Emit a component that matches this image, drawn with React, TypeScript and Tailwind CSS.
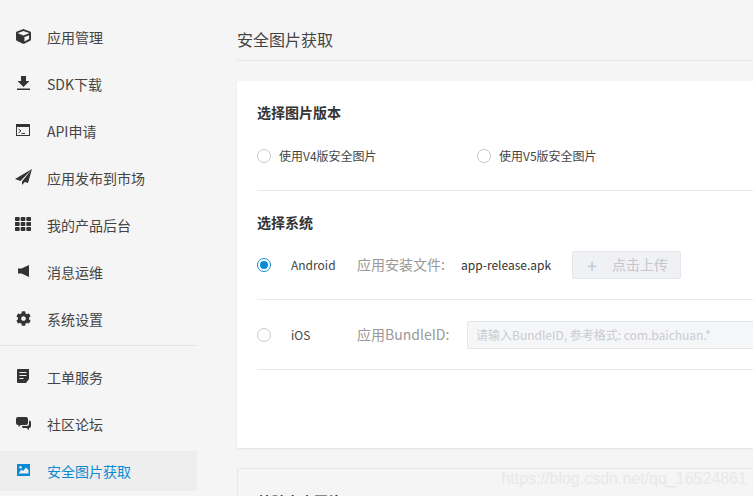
import type { ReactNode } from "react";
import { FaCog, FaCube, FaTh } from "react-icons/fa";

const FONT = "font-['Noto_Sans_CJK_SC','Noto_Sans',sans-serif]";

const DownloadIcon = () => (
  <svg width="13" height="14" viewBox="0 0 13 14">
    <path fill="#333" d="M4 0h5v5h3.500L6.500 11 .5 5H4zM0 12.500h13V14H0z" />
  </svg>
);

const PlaneIcon = () => (
  <svg width="17" height="16" viewBox="0 0 17 16">
    <path fill="#333" d="M17 0L0 10l5.500 2zM17 0L7 12.500V16l2.800-3 3.200 1z" />
  </svg>
);

const SpeakerIcon = () => (
  <svg width="11" height="12" viewBox="0 0 11 12">
    <path fill="#333" d="M0 3.500h3.500L11 0v12L3.500 8.500H0z" />
  </svg>
);

const TerminalIcon = () => (
  <svg width="14" height="13" viewBox="0 0 14 13">
    <path fill="#333" fillRule="evenodd" d="M0 0h14v12H0zM1 3v8h12V3z" />
    <path fill="none" stroke="#333" d="M2.500 5l2.500 2-2.500 2M5.500 9.500H9" />
  </svg>
);

const NoteIcon = () => (
  <svg width="12" height="14" viewBox="0 0 12 14">
    <path
      fill="#333"
      fillRule="evenodd"
      d="M1 0h11v10l-3 4H1a1 1 0 0 1-1-1V1a1 1 0 0 1 1-1zM2.500 3v1h7V3zM2.500 6v1h7V6zM2.500 9v1h4V9z"
    />
  </svg>
);

const ChatIcon = () => (
  <svg width="15" height="13" viewBox="0 0 15 13">
    <path fill="#333" d="M2 0h8a2 2 0 0 1 2 2v4a2 2 0 0 1-2 2H5L2.500 10V8H2a2 2 0 0 1-2-2V2a2 2 0 0 1 2-2z" />
    <path fill="#333" d="M13 3.500a2 2 0 0 1 2 2V9a2 2 0 0 1-2 2v2l-2.500-2H6.500L6 9h5a2 2 0 0 0 2-2z" />
  </svg>
);

const PictureIcon = () => (
  <svg width="13" height="12" viewBox="0 0 13 12">
    <path
      fill="#0a8ad2"
      fillRule="evenodd"
      d="M0 0h13v12H0zM1.500 9.500h10V6L9 3.500 6 7 4.500 5.500zM3.500 2a1.300 1.300 0 1 0 .01 0z"
    />
  </svg>
);

type NavItem = { icon: ReactNode; label: string; active?: boolean };

const mainNav: NavItem[] = [
  { icon: <FaCube size={15} color="#333" />, label: "应用管理" },
  { icon: <DownloadIcon />, label: "SDK下载" },
  { icon: <TerminalIcon />, label: "API申请" },
  { icon: <PlaneIcon />, label: "应用发布到市场" },
  { icon: <FaTh size={16} color="#333" />, label: "我的产品后台" },
  { icon: <SpeakerIcon />, label: "消息运维" },
  { icon: <FaCog size={15} color="#333" />, label: "系统设置" },
];

const subNav: NavItem[] = [
  { icon: <NoteIcon />, label: "工单服务" },
  { icon: <ChatIcon />, label: "社区论坛" },
  { icon: <PictureIcon />, label: "安全图片获取", active: true },
];

const NavRow = ({ icon, label, active }: NavItem) => (
  <div className={`flex h-10 items-center ${active ? "bg-[#eeeeee] text-[#0a8ad2]" : "text-[#444]"}`}>
    <span className="mb-[2px] flex w-[47px] justify-center pr-[1px]">{icon}</span>
    <span className="text-[14px] leading-5">{label}</span>
  </div>
);

const Radio = ({ checked }: { checked?: boolean }) =>
  checked ? (
    <span className="flex size-[14px] shrink-0 items-center justify-center rounded-full border border-[#0a8ad2]">
      <span className="size-2 rounded-full bg-[#0a8ad2]" />
    </span>
  ) : (
    <span className="size-[14px] shrink-0 rounded-full border border-[#c5c8d0] bg-white" />
  );

export default function App() {
  return (
    <div className={`relative flex h-[496px] w-[753px] overflow-hidden bg-[#f5f5f5] ${FONT}`}>
      <aside className="flex w-[197px] shrink-0 flex-col pt-[17px]">
        <div className="flex flex-col gap-[7px]">
          {mainNav.map((item) => (
            <NavRow key={item.label} {...item} />
          ))}
        </div>
        <div className="mt-[6px] mb-[11px] h-px bg-[#e3e3e3]" />
        <div className="flex flex-col gap-[7px]">
          {subNav.map((item) => (
            <NavRow key={item.label} {...item} />
          ))}
        </div>
      </aside>

      <main className="ml-10 w-[530px] shrink-0">
        <div className="flex h-[61px] items-end border-b border-[#e6e6e6] pb-[9px]">
          <h1 className="text-[16px] leading-6 text-[#444]">安全图片获取</h1>
        </div>

        <section className="mt-5 h-[367px] rounded-[2px] bg-white pl-5 shadow-[0_1px_2px_rgba(0,0,0,0.08)]">
          <div className="flex h-[110px] flex-col border-b border-[#e8e8e8] pt-[19px]">
            <h2 className="text-[14px] leading-6 font-bold text-[#333]">选择图片版本</h2>
            <div className="mt-[22px] flex items-center text-[12px] leading-5 text-[#444]">
              <div className="flex w-[220px] items-center gap-2">
                <Radio />
                <span>使用V4版安全图片</span>
              </div>
              <div className="flex items-center gap-2">
                <Radio />
                <span>使用V5版安全图片</span>
              </div>
            </div>
          </div>

          <h2 className="mt-[19px] text-[14px] leading-6 font-bold text-[#333]">选择系统</h2>

          <div className="flex h-[66px] items-center border-b border-[#e8e8e8] pb-[4px] text-[12px]">
            <Radio checked />
            <span className="ml-5 w-[66px] text-[#444]">Android</span>
            <span className="w-[104px] text-[14px] text-[#999]">应用安装文件:</span>
            <span className="w-[111px] text-[#333]">app-release.apk</span>
            <button className="flex h-7 w-[109px] items-center rounded-[2px] border border-[#e4e6ea] bg-[#f0f1f4] pl-[14px] text-[14px] text-[#c4c6cc]">
              <span className="text-[18px] leading-none">+</span>
              <span className="ml-[15px]">点击上传</span>
            </button>
          </div>

          <div className="flex h-[70px] items-center border-b border-[#e8e8e8] text-[12px]">
            <Radio />
            <span className="ml-5 w-[66px] text-[#444]">iOS</span>
            <span className="w-[110px] text-[14px] text-[#999]">应用BundleID:</span>
            <div className="flex h-7 flex-1 items-center rounded-l-[2px] border border-r-0 border-[#e4e6ea] bg-[#f5f6f8] pl-[8px] text-[#c9cbd0]">
              请输入BundleID, 参考格式: com.baichuan.*
            </div>
          </div>
        </section>

        <section className="mt-5 h-[60px] rounded-[2px] border border-[#e6e6e6] pl-5 pt-[20px]">
          <h2 className="text-[14px] leading-6 font-bold text-[#333]">校验安全图片</h2>
        </section>
      </main>

      <span className="absolute right-[6px] bottom-[7px] font-['Liberation_Sans',sans-serif] text-[16px] leading-5 text-[#e8e8e8]">
        https://blog.csdn.net/qq_16524861
      </span>
    </div>
  );
}
